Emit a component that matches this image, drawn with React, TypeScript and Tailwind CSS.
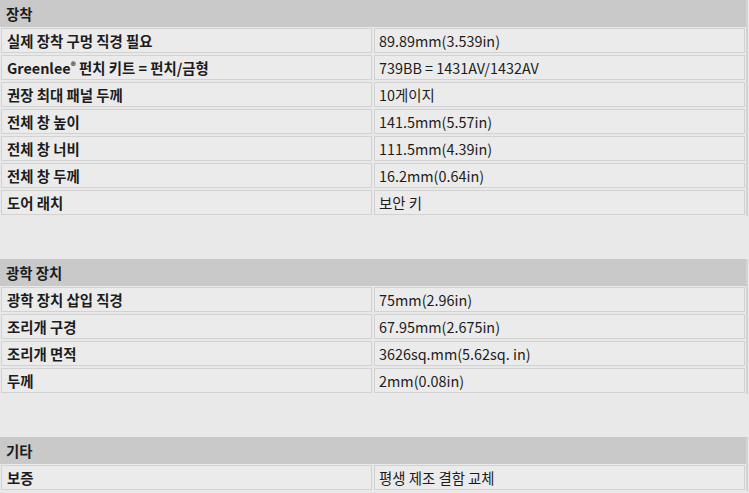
const sections: { title: string; rows: [string, string][] }[] = [
  {
    title: "장착",
    rows: [
      ["실제 장착 구멍 직경 필요", "89.89mm(3.539in)"],
      ["Greenlee® 펀치 키트 = 펀치/금형", "739BB = 1431AV/1432AV"],
      ["권장 최대 패널 두께", "10게이지"],
      ["전체 창 높이", "141.5mm(5.57in)"],
      ["전체 창 너비", "111.5mm(4.39in)"],
      ["전체 창 두께", "16.2mm(0.64in)"],
      ["도어 래치", "보안 키"],
    ],
  },
  {
    title: "광학 장치",
    rows: [
      ["광학 장치 삽입 직경", "75mm(2.96in)"],
      ["조리개 구경", "67.95mm(2.675in)"],
      ["조리개 면적", "3626sq.mm(5.62sq. in)"],
      ["두께", "2mm(0.08in)"],
    ],
  },
  {
    title: "기타",
    rows: [["보증", "평생 제조 결함 교체"]],
  },
];

// keep the ® small and raised like the source table
function renderLabel(text: string) {
  if (!text.includes("®")) return <span>{text}</span>;
  const [a, b] = text.split("®");
  return (
    <span>
      {a}
      <span className="relative -top-[4px] text-[10px]">®</span>
      {b}
    </span>
  );
}

export default function App() {
  return (
    <div
      className="min-h-[493px] w-[749px] bg-[#e9e9e9] text-[14.4px] text-[#1c1c1c]"
      style={{ fontFamily: '"Noto Sans CJK KR", "Noto Sans", sans-serif' }}
    >
      <div className="flex flex-col gap-[43px]">
        {sections.map((s) => (
          <div key={s.title} className="mr-[1px] border-r-2 border-[#d3d3d3]">
            <div className="flex h-[27px] items-center bg-[#c9c9c9] px-[6px] font-bold">
              {s.title}
            </div>
            <div className="flex flex-col gap-[2px] p-[1px]">
              {s.rows.map(([label, value]) => (
                <div key={label} className="grid grid-cols-2 gap-[2px]">
                  <div className="flex h-[25px] items-center border border-[#d2d2d2] bg-[#ebebeb] px-[5px] pt-[1px] font-bold leading-none">
                    {renderLabel(label)}
                  </div>
                  <div className="flex h-[25px] items-center border border-[#d2d2d2] bg-[#ebebeb] px-[4px] pt-[1px] leading-none">
                    {value}
                  </div>
                </div>
              ))}
            </div>
          </div>
        ))}
      </div>
    </div>
  );
}
